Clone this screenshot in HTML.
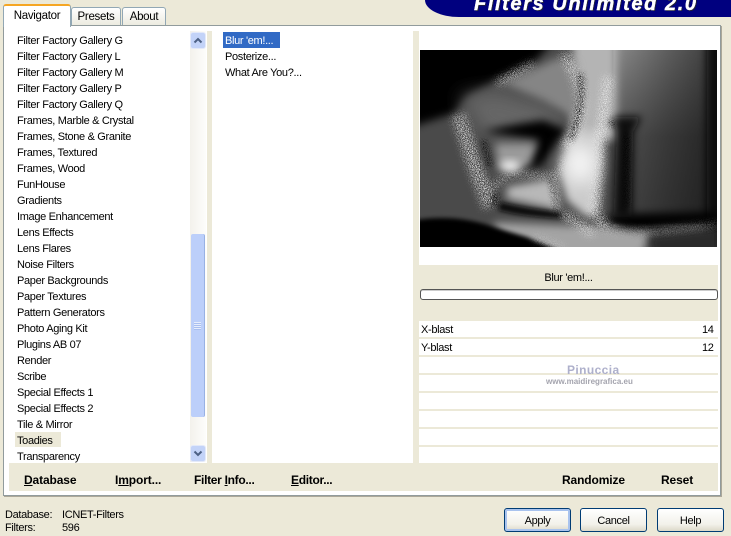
<!DOCTYPE html>
<html><head><meta charset="utf-8"><style>
html,body{margin:0;padding:0}
body{width:731px;height:536px;position:relative;overflow:hidden;background:#ece9d8;font:11px "Liberation Sans",sans-serif;letter-spacing:-.33px;color:#000}
.a{position:absolute}
.t{position:absolute;white-space:nowrap;line-height:14px;height:14px;margin-top:1px}
.b{font-weight:bold;font-size:12px;letter-spacing:-.12px;margin-top:0}
.btn{position:absolute;top:508px;height:22px;width:65px;border:1px solid #003c74;border-radius:3px;background:linear-gradient(#fff,#f2f1ea 70%,#dcd8c8);text-align:center;line-height:24px}
.tab{position:absolute;box-sizing:border-box;border:1px solid #91a7b4;border-bottom:0;border-radius:3px 3px 0 0;background:linear-gradient(#fff,#ecebe0);text-align:center;font-size:11.5px;letter-spacing:-.3px}
.rowline{position:absolute;left:419px;width:299px;height:2px;background:#ece9d8}
</style></head><body>
<div class="a" style="left:425px;top:0;width:306px;height:17px;background:#00007f;border-bottom-left-radius:34px 17px"></div>
<div class="a" style="left:474px;top:-6px;height:20px;white-space:nowrap;font:italic bold 20px/20px 'Liberation Sans',sans-serif;color:#fff;letter-spacing:1.6px;-webkit-text-stroke:.4px #fff;text-shadow:1px 1px 0 #223">Filters Unlimited 2.0</div>

<div class="a" style="left:3px;top:25px;width:718px;height:471px;box-sizing:border-box;border:1px solid #919b9c;background:#fff;box-shadow:1px 1px 0 #aca899"></div>
<div class="tab" style="left:71px;top:7px;width:50px;height:18px;line-height:19px">Presets</div>
<div class="tab" style="left:122px;top:7px;width:44px;height:18px;line-height:19px">About</div>
<div class="tab" style="left:3px;top:4px;width:68px;height:23px;background:#fff;border-top:2px solid #f5a623;border-color:#f5a623 #91a7b4 #fff;line-height:20px;z-index:2">Navigator</div>

<div class="a" style="left:207px;top:31px;width:5px;height:432px;background:#ece9d8"></div>
<div class="a" style="left:413px;top:31px;width:6px;height:460px;background:#ece9d8"></div>
<div class="a" style="left:9px;top:463px;width:404px;height:28px;background:#ece9d8"></div>
<div class="a" style="left:419px;top:463px;width:299px;height:28px;background:#ece9d8"></div>

<div class="a" style="left:190px;top:31px;width:16px;height:431px;background:linear-gradient(90deg,#f3f1ec,#fdfdfb)"></div>
<div class="a" style="left:191px;top:33px;width:14px;height:15px;background:#c3d3f8;border-radius:2px;box-shadow:0 0 0 1px #e3e9f9"></div>
<svg class="a" style="left:191px;top:33px" width="14" height="15"><path d="M3.500 9.500L7 6l3.500 3.500" fill="none" stroke="#4d6185" stroke-width="2"/></svg>
<div class="a" style="left:191px;top:234px;width:13px;height:183px;background:#bccffa;border-radius:2px;border-right:1px solid #98b1e4"></div>
<div class="a" style="left:194px;top:322px;width:7px;height:8px;background:repeating-linear-gradient(#e6edfd 0 1px,#a9bff0 1px 2px)"></div>
<div class="a" style="left:191px;top:446px;width:14px;height:15px;background:#c3d3f8;border-radius:2px;box-shadow:0 0 0 1px #e3e9f9"></div>
<svg class="a" style="left:191px;top:446px" width="14" height="15"><path d="M3.500 5.500L7 9l3.500-3.500" fill="none" stroke="#4d6185" stroke-width="2"/></svg>

<div class="a" style="left:15px;top:432px;width:46px;height:15px;background:#ece9d8"></div>
<div class="t" style="left:17px;top:33px">Filter Factory Gallery G</div>
<div class="t" style="left:17px;top:49px">Filter Factory Gallery L</div>
<div class="t" style="left:17px;top:65px">Filter Factory Gallery M</div>
<div class="t" style="left:17px;top:81px">Filter Factory Gallery P</div>
<div class="t" style="left:17px;top:97px">Filter Factory Gallery Q</div>
<div class="t" style="left:17px;top:113px">Frames, Marble &amp; Crystal</div>
<div class="t" style="left:17px;top:129px">Frames, Stone &amp; Granite</div>
<div class="t" style="left:17px;top:145px">Frames, Textured</div>
<div class="t" style="left:17px;top:161px">Frames, Wood</div>
<div class="t" style="left:17px;top:177px">FunHouse</div>
<div class="t" style="left:17px;top:193px">Gradients</div>
<div class="t" style="left:17px;top:209px">Image Enhancement</div>
<div class="t" style="left:17px;top:225px">Lens Effects</div>
<div class="t" style="left:17px;top:241px">Lens Flares</div>
<div class="t" style="left:17px;top:257px">Noise Filters</div>
<div class="t" style="left:17px;top:273px">Paper Backgrounds</div>
<div class="t" style="left:17px;top:289px">Paper Textures</div>
<div class="t" style="left:17px;top:305px">Pattern Generators</div>
<div class="t" style="left:17px;top:321px">Photo Aging Kit</div>
<div class="t" style="left:17px;top:337px">Plugins AB 07</div>
<div class="t" style="left:17px;top:353px">Render</div>
<div class="t" style="left:17px;top:369px">Scribe</div>
<div class="t" style="left:17px;top:385px">Special Effects 1</div>
<div class="t" style="left:17px;top:401px">Special Effects 2</div>
<div class="t" style="left:17px;top:417px">Tile &amp; Mirror</div>
<div class="t" style="left:17px;top:433px">Toadies</div>
<div class="t" style="left:17px;top:449px">Transparency</div>

<div class="a" style="left:223px;top:32px;width:57px;height:16px;background:#316ac5"></div>
<div class="t" style="left:225px;top:33px;color:#fff">Blur 'em!...</div>
<div class="t" style="left:225px;top:49px">Posterize...</div>
<div class="t" style="left:225px;top:65px">What Are You?...</div>

<svg class="a" style="left:420px;top:50px" width="297" height="197" viewBox="60 150 891 590" preserveAspectRatio="none">
<defs>
<filter id="b1" x="-50%" y="-50%" width="200%" height="200%"><feGaussianBlur stdDeviation="28"/></filter>
<filter id="b2" x="-50%" y="-50%" width="200%" height="200%"><feGaussianBlur stdDeviation="13"/></filter>
<filter id="b3" x="-50%" y="-50%" width="200%" height="200%"><feGaussianBlur stdDeviation="6"/></filter>
<filter id="sp" x="-20%" y="-20%" width="140%" height="140%">
<feGaussianBlur in="SourceGraphic" stdDeviation="11" result="s"/>
<feTurbulence type="fractalNoise" baseFrequency="0.42" numOctaves="1" seed="4" result="n"/>
<feColorMatrix in="n" type="matrix" values="0 0 0 0 .85 0 0 0 0 .85 0 0 0 0 .85 9 0 0 0 -4.3" result="m"/>
<feComposite in="m" in2="s" operator="in"/>
</filter>
<filter id="spd" x="-20%" y="-20%" width="140%" height="140%">
<feGaussianBlur in="SourceGraphic" stdDeviation="8" result="s"/>
<feTurbulence type="fractalNoise" baseFrequency="0.42" numOctaves="1" seed="9" result="n"/>
<feColorMatrix in="n" type="matrix" values="0 0 0 0 0 0 0 0 0 0 0 0 0 0 0 9 0 0 0 -4.3" result="m"/>
<feComposite in="m" in2="s" operator="in"/>
</filter>
<linearGradient id="rg" x1="0" x2="1" y1="0" y2="0"><stop offset="0" stop-color="#8a8a8a"/><stop offset=".4" stop-color="#5e5e5e"/><stop offset=".8" stop-color="#383838"/><stop offset="1" stop-color="#0c0c0c"/></linearGradient>
<linearGradient id="dk" x1="0" x2="0" y1="0" y2="1"><stop offset="0" stop-color="#000" stop-opacity="0"/><stop offset=".5" stop-color="#000" stop-opacity=".4"/><stop offset="1" stop-color="#000" stop-opacity=".5"/></linearGradient>
<clipPath id="cl"><rect x="60" y="150" width="891" height="590"/></clipPath>
</defs>
<g clip-path="url(#cl)">
<rect x="60" y="150" width="891" height="590" fill="#4a4a4a"/>
<rect x="640" y="100" width="400" height="580" fill="url(#rg)"/>
<rect x="640" y="150" width="320" height="520" fill="url(#dk)"/>
<rect x="920" y="100" width="80" height="640" fill="#080808" filter="url(#b2)"/>
<path d="M20 110H470L400 190L290 240L200 290L160 340L20 385Z" fill="#000" filter="url(#b2)"/>
<path d="M520 110H650V420H510Z" fill="#b4b4b4" filter="url(#b2)"/>
<path d="M180 290L290 275L440 320L500 380L430 420L250 400Z" fill="#666" filter="url(#b1)"/>
<path d="M310 250L470 175L530 190L540 290L520 350L430 300Z" fill="#858585" filter="url(#b2)"/>
<path d="M250 395Q350 370 430 360L500 390L420 500L350 510L420 420Z" fill="#000" filter="url(#b2)"/>
<path d="M285 430H410L390 495L340 515L295 505Z" fill="#9a9a9a" filter="url(#b2)"/>
<ellipse cx="330" cy="497" rx="30" ry="15" fill="#f4f4f4" filter="url(#b2)"/>
<path d="M510 390H610L590 640L560 650L500 600L480 520Z" fill="#cacaca" filter="url(#b2)"/>
<ellipse cx="540" cy="490" rx="50" ry="62" fill="#f4f4f4" filter="url(#b1)"/>
<path d="M320 560L460 535L480 630L320 595Z" fill="#b8b8b8" filter="url(#b2)"/>
<path d="M300 605Q380 625 480 635L485 655Q370 650 295 630Z" fill="#111" filter="url(#b3)"/>
<path d="M640 350H725L700 395L695 650H640L650 395Z" fill="#080808" filter="url(#b2)"/>
<path d="M600 650L700 640L950 635V670L800 680L680 700Z" fill="#030303" filter="url(#b2)"/>
<path d="M280 665L600 680L760 700L720 770H330Z" fill="#a4a4a4" filter="url(#b2)"/>
<path d="M740 705L960 680V770H760Z" fill="#2a2a2a" filter="url(#b2)"/>
<path d="M40 660Q170 640 280 680L380 710L500 760H40Z" fill="#030303" filter="url(#b3)"/>
<g filter="url(#sp)" fill="none" stroke="#fff">
<path d="M290 250L400 190" stroke-width="18"/>
<path d="M490 160Q555 260 540 340T490 440" stroke-width="30"/>
<path d="M175 345L225 500L270 620" stroke-width="42"/>
<path d="M625 230L600 420L585 640L620 685" stroke-width="32"/>
<path d="M270 580Q300 510 400 525T490 470" stroke-width="14"/>
<path d="M465 530L470 630" stroke-width="14"/>
<path d="M490 640L580 700" stroke-width="26"/>
<path d="M620 692L760 695L950 672" stroke-width="8"/>
<path d="M400 710L490 740" stroke-width="8"/>
</g>
<g filter="url(#spd)" fill="none" stroke="#000">
<path d="M540 220Q555 320 510 420" stroke-width="22"/>
<path d="M285 580V620" stroke-width="22"/>
<path d="M250 420L270 500" stroke-width="18"/>
<path d="M630 360L640 380" stroke-width="18"/>
<path d="M680 400V620" stroke-width="18"/>
<path d="M450 530L470 630" stroke-width="10"/>
</g>
</g>
</svg>

<div class="a" style="left:419px;top:265px;width:299px;height:56px;background:#ece9d8"></div>
<div class="t" style="left:419px;width:299px;text-align:center;top:270px">Blur 'em!...</div>
<div class="a" style="left:420px;top:289px;width:298px;height:11px;box-sizing:border-box;border:1px solid #555;border-radius:3px;background:#fff;box-shadow:inset 0 1px 0 #ccc"></div>

<div class="rowline" style="top:337px"></div>
<div class="rowline" style="top:355px"></div>
<div class="rowline" style="top:373px"></div>
<div class="rowline" style="top:391px"></div>
<div class="rowline" style="top:409px"></div>
<div class="rowline" style="top:427px"></div>
<div class="rowline" style="top:445px"></div>
<div class="t" style="left:421px;top:322px">X-blast</div>
<div class="t" style="left:421px;top:340px">Y-blast</div>
<div class="t" style="left:702px;top:322px">14</div>
<div class="t" style="left:702px;top:340px">12</div>
<div class="t" style="left:567px;top:362px;font-size:12px;font-weight:bold;color:#aeb0cb;letter-spacing:.4px">Pinuccia</div>
<div class="t" style="left:546px;top:374px;font-size:8px;font-weight:bold;color:#a4a4ae;letter-spacing:0">www.maidiregrafica.eu</div>

<div class="t b" style="left:24px;top:473px"><u>D</u>atabase</div>
<div class="t b" style="left:115px;top:473px">I<u>m</u>port...</div>
<div class="t b" style="left:194px;top:473px;letter-spacing:-.3px">Filter <u>I</u>nfo...</div>
<div class="t b" style="left:291px;top:473px;letter-spacing:-.3px"><u>E</u>ditor...</div>
<div class="t b" style="left:562px;top:473px">Randomize</div>
<div class="t b" style="left:661px;top:473px">Reset</div>

<div class="t" style="left:5px;top:507px">Database:</div>
<div class="t" style="left:62px;top:507px">ICNET-Filters</div>
<div class="t" style="left:5px;top:520px">Filters:</div>
<div class="t" style="left:62px;top:520px">596</div>

<div class="btn" style="left:504px;box-shadow:inset 0 0 0 2px #a9c3ee">Apply</div>
<div class="btn" style="left:580px">Cancel</div>
<div class="btn" style="left:657px">Help</div>
</body></html>
